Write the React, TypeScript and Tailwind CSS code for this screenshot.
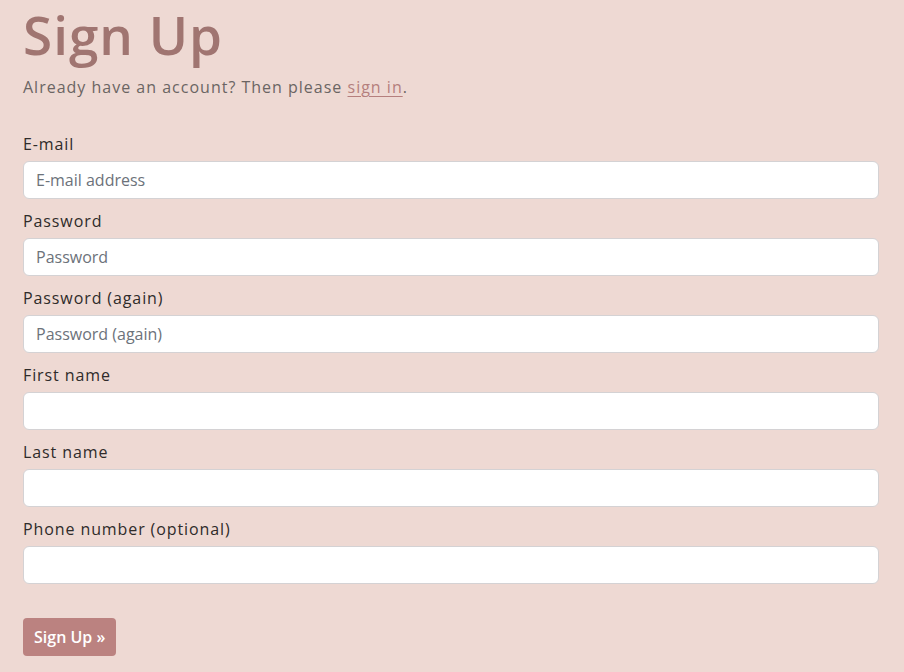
import React from "react";

const fields = [
  { label: "E-mail", placeholder: "E-mail address", type: "email" },
  { label: "Password", placeholder: "Password", type: "password" },
  { label: "Password (again)", placeholder: "Password (again)", type: "password" },
  { label: "First name", placeholder: "", type: "text" },
  { label: "Last name", placeholder: "", type: "text" },
  { label: "Phone number (optional)", placeholder: "", type: "text" },
];

export default function App() {
  return (
    <div
      className="min-h-[672px] w-full bg-[#eed9d3] px-[23px] pt-[2px]"
      style={{ fontFamily: '"Open Sans", "Noto Sans", sans-serif' }}
    >
      <h1 className="mt-0 text-[53px] leading-[66px] font-semibold text-[#a07571] tracking-[1px]">
        Sign Up
      </h1>
      <p className="mt-[7px] text-[16px] leading-[24px] text-[#6b6563] tracking-[1px]">
        Already have an account? Then please{" "}
        <a href="#" className="text-[#b57f7d] underline underline-offset-[3px]">
          sign in
        </a>
        .
      </p>
      <form className="mt-[33px] w-[856px]">
        {fields.map((f) => (
          <div key={f.label} className="mb-[10px]">
            <label className="block text-[16px] leading-[24px] mb-[5px] text-[#2f2b2a] tracking-[0.9px]">
              {f.label}
            </label>
            <input
              type={f.type}
              placeholder={f.placeholder}
              className="block w-full h-[38px] rounded-[6px] border border-[#d4d2d4] bg-white px-[12px] text-[16px] text-[#495057] placeholder:text-[#6c727a] outline-none"
            />
          </div>
        ))}
        <button
          type="button"
          className="mt-[24px] h-[38px] px-[11px] rounded-[4px] bg-[#bb8280] text-white text-[16px] font-semibold"
        >
          Sign Up »
        </button>
      </form>
    </div>
  );
}
